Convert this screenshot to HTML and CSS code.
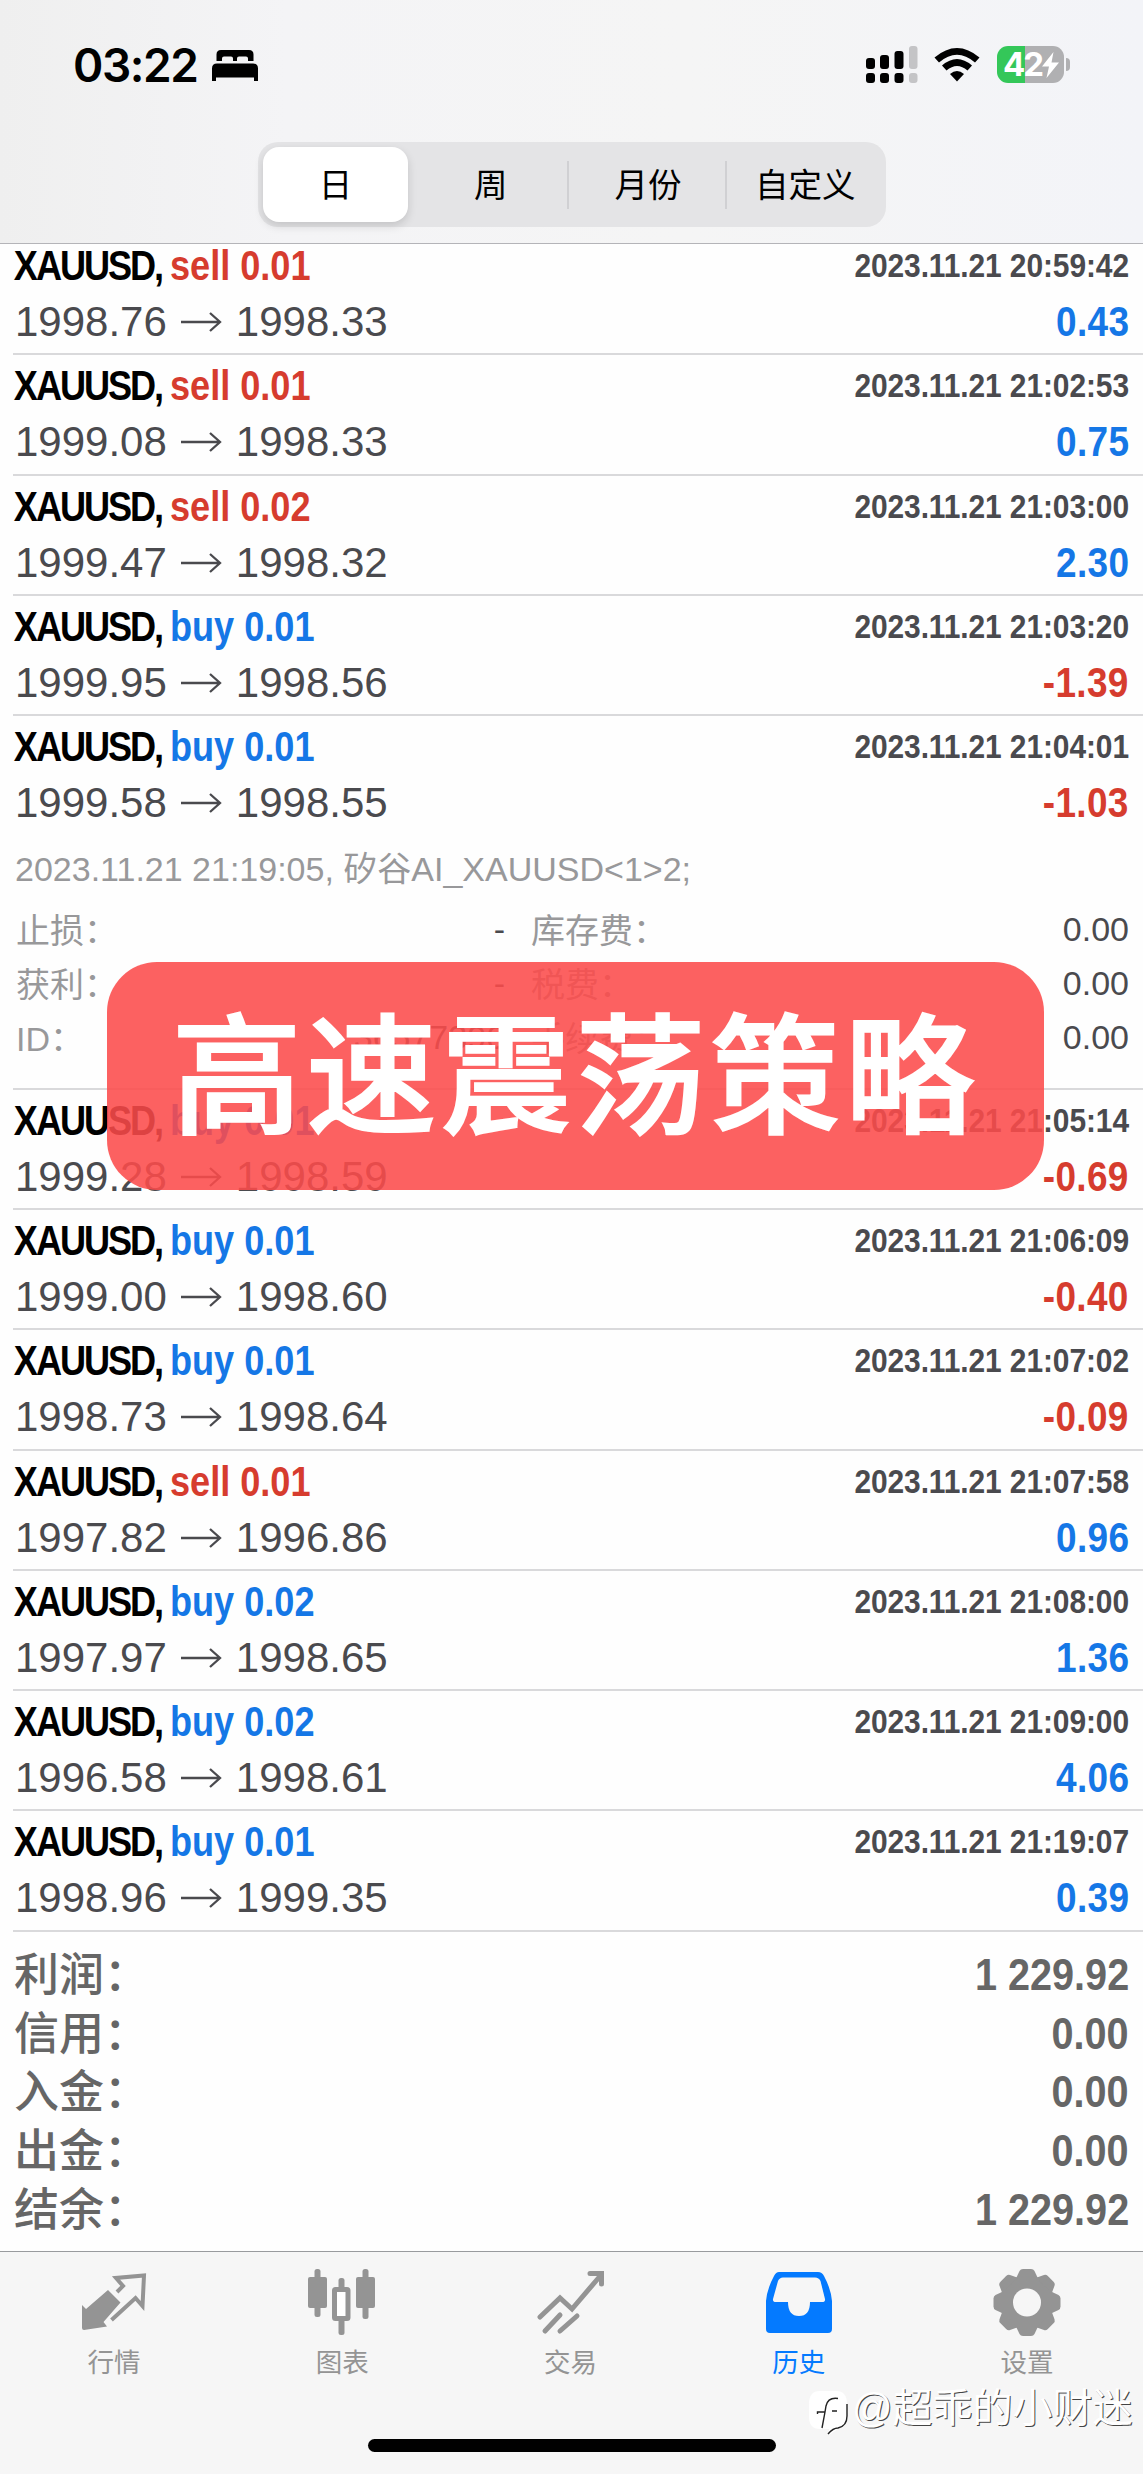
FILE: index.html
```
<!DOCTYPE html>
<html lang="zh-CN">
<head>
  <meta charset="UTF-8">
  <meta name="viewport" content="width=device-width, initial-scale=1">
  <title>历史</title>
  <link rel="stylesheet" href="styles.css">
</head>
<body>
  <div class="screen">
    <header class="header">
      <!-- Status bar -->
      <div class="status-bar">
        <div class="status-left">
          <span class="clock">03:22</span>
          <svg class="icon-bed" width="46" height="32" viewBox="0 0 46 32">
            <path d="M4.500 11V4.500Q4.500 0 9 0H37Q41.500 0 41.500 4.500V11H36V8.500Q36 6.500 34 6.500H27Q25 6.500 25 8.500V11H21V8.500Q21 6.500 19 6.500H12Q10 6.500 10 8.500V11Z"/>
            <path d="M0 31V18.500Q0 13.500 5 13.500H41Q46 13.500 46 18.500V31H42V27.500H4V31Z"/>
          </svg>
        </div>
        <div class="status-right">
          <svg width="54" height="38" viewBox="0 0 54 38">
            <rect x="0" y="12" width="9" height="11" rx="3"/>
            <rect x="14" y="9" width="9" height="14" rx="3"/>
            <rect x="28.500" y="5" width="9" height="18" rx="3"/>
            <rect x="43" y="0" width="8.500" height="23" rx="3" fill="#c4c4c6"/>
            <rect x="0" y="27" width="9" height="10" rx="3"/>
            <rect x="14" y="27" width="9" height="10" rx="3"/>
            <rect x="28.500" y="27" width="9" height="10" rx="3"/>
            <rect x="43" y="27" width="8.500" height="10" rx="3" fill="#c4c4c6"/>
          </svg>
          <svg class="icon-wifi" width="46" height="34" viewBox="0 0 46 34">
            <path d="M0.500 9.500Q23 -9.500 45.500 9.500L41 14.500Q23 -1 5 14.500Z"/>
            <path d="M8 17.500Q23 4.500 38 17.500L33.500 22.500Q23 13.500 12.500 22.500Z"/>
            <path d="M16 26Q23 20 30 26L23 33.500Z"/>
          </svg>
          <div class="battery">
            <span class="battery-level">42</span>
            <svg class="icon-bolt" width="17" height="26" viewBox="0 0 17 26">
              <path d="M11.500 0L0 14.500H7L4.500 26L17 10.500H9.500Z" fill="#fff"/>
            </svg>
          </div>
        </div>
      </div>
      <!-- Period selector -->
      <nav class="segments">
        <span class="segment selected">日</span>
        <span class="segment">周</span>
        <span class="segment divided">月份</span>
        <span class="segment divided">自定义</span>
      </nav>
    </header>

    <main class="history">
      <div id="deals"></div>
      <dl class="summary">
        <div><dt>利润：</dt><dd>1 229.92</dd></div>
        <div><dt>信用：</dt><dd>0.00</dd></div>
        <div><dt>入金：</dt><dd>0.00</dd></div>
        <div><dt>出金：</dt><dd>0.00</dd></div>
        <div><dt>结余：</dt><dd>1 229.92</dd></div>
      </dl>
    </main>

    <footer class="tab-bar">
      <a class="tab">
        <svg width="66" height="72" viewBox="0 -4 66 72">
          <path d="M27 17L39.500 29.500L22.500 49L26 53.500L3 57Q1 57 1 55V32L5 36Z" fill="currentColor"/>
          <path d="M36 19L42 13L35 5L63 2.500L61.500 33L54.500 25L30.500 47" fill="none" stroke="currentColor" stroke-width="4"/>
        </svg>
        <span>行情</span>
      </a>
      <a class="tab">
        <svg width="68" height="72" viewBox="0 0 68 72">
          <g fill="currentColor">
            <rect x="6.500" y="0" width="6" height="48" rx="2.500"/>
            <rect x="0" y="8" width="19" height="31" rx="2"/>
            <rect x="54.500" y="0" width="6" height="50" rx="2.500"/>
            <rect x="48" y="8" width="19" height="31" rx="2"/>
            <rect x="30.500" y="9" width="6" height="15" rx="2.500"/>
            <rect x="30.500" y="46" width="6" height="20" rx="2.500"/>
          </g>
          <rect x="26.500" y="20.500" width="13.500" height="29" rx="1" fill="#fff" stroke="currentColor" stroke-width="5"/>
        </svg>
        <span>图表</span>
      </a>
      <a class="tab">
        <svg width="68" height="72" viewBox="0 0 68 72">
          <g fill="none" stroke="currentColor" stroke-width="5" stroke-linecap="round">
            <path d="M3 48L23 29L35 40L64 6"/>
            <path d="M53 4.500H64.500V15"/>
            <path d="M8 62L23 46"/>
            <path d="M23 62L40 47"/>
          </g>
        </svg>
        <span>交易</span>
      </a>
      <a class="tab active">
        <svg width="68" height="72" viewBox="0 0 68 72">
          <path d="M14 3H53Q57 3 59 7Q66 20 67 32V60Q67 64 63 64H5Q1 64 1 60V32Q2 20 9 7Q11 3 14 3Z" fill="currentColor"/>
          <path d="M18 8.500H50Q54 8.500 55.500 12L60 30Q60.500 33 57 33H45Q45 47 34 47Q23 47 23 33H11Q7.500 33 8 30L13 12Q14.500 8.500 18 8.500Z" fill="#f6f6f6"/>
        </svg>
        <span>历史</span>
      </a>
      <a class="tab">
        <svg width="68" height="72" viewBox="0 0 68 72">
          <g fill="currentColor" transform="translate(34 33.500)">
            <circle r="27"/>
            <path id="tooth" d="M-11 -24L-7.500 -31.500Q-6.500 -33.500 -4 -33.500H4Q6.500 -33.500 7.500 -31.500L11 -24Z"/>
            <use href="#tooth" transform="rotate(45)"/>
            <use href="#tooth" transform="rotate(90)"/>
            <use href="#tooth" transform="rotate(135)"/>
            <use href="#tooth" transform="rotate(180)"/>
            <use href="#tooth" transform="rotate(225)"/>
            <use href="#tooth" transform="rotate(270)"/>
            <use href="#tooth" transform="rotate(315)"/>
            <circle r="14" fill="#f6f6f6"/>
          </g>
        </svg>
        <span>设置</span>
      </a>
    </footer>

    <div class="banner">高速震荡策略</div>
    <div class="home-indicator"></div>
    <div class="watermark">
      <svg width="42" height="46" viewBox="0 0 42 46">
        <path d="M12 1H28Q39 1 39 14V26Q39 36 30 39L21 45V39H12Q1 39 1 27V14Q1 1 12 1Z" fill="#fff"/>
        <path d="M30 8.500Q20 7 18 16L17 22L14 38M9.500 24V22H17M24 21H29M39 14V26Q39 36 30 38Q25 38 20 44" fill="none" stroke="#222" stroke-width="1.400"/>
      </svg>
      <span>@超乖的小财迷</span>
    </div>
  </div>

  <script>
    const deals = [
      ['sell', '0.01', '1998.76', '1998.33', '20:59:42', '0.43'],
      ['sell', '0.01', '1999.08', '1998.33', '21:02:53', '0.75'],
      ['sell', '0.02', '1999.47', '1998.32', '21:03:00', '2.30'],
      ['buy', '0.01', '1999.95', '1998.56', '21:03:20', '-1.39'],
      ['buy', '0.01', '1999.58', '1998.55', '21:04:01', '-1.03'],
      ['buy', '0.01', '1999.28', '1998.59', '21:05:14', '-0.69'],
      ['buy', '0.01', '1999.00', '1998.60', '21:06:09', '-0.40'],
      ['buy', '0.01', '1998.73', '1998.64', '21:07:02', '-0.09'],
      ['sell', '0.01', '1997.82', '1996.86', '21:07:58', '0.96'],
      ['buy', '0.02', '1997.97', '1998.65', '21:08:00', '1.36'],
      ['buy', '0.02', '1996.58', '1998.61', '21:09:00', '4.06'],
      ['buy', '0.01', '1998.96', '1999.35', '21:19:07', '0.39']
    ];

    const arrow = `<svg class="arrow" width="42" height="22" viewBox="0 0 42 22">
      <path d="M1 11H39M30 2L40 11L30 20" fill="none" stroke="currentColor" stroke-width="2.300"/></svg>`;

    // Expanded block under the opened deal
    const details = `
      <div class="details">
        <p class="comment">2023.11.21 21:19:05, 矽谷AI_XAUUSD&lt;1&gt;2;</p>
        <div class="details-grid">
          <span class="label">止损：</span><span class="value">-</span>
          <span class="label">库存费：</span><span class="value">0.00</span>
          <span class="label">获利：</span><span class="value">-</span>
          <span class="label">税费：</span><span class="value">0.00</span>
          <span class="label">ID：</span><span class="value">36577396</span>
          <span class="label">手续费：</span><span class="value">0.00</span>
        </div>
      </div>`;

    document.getElementById('deals').innerHTML = deals.map((d, i) => `
      <section class="deal${i === 4 ? ' open' : ''}">
        <div class="deal-line">
          <span class="symbol">XAUUSD, <b class="${d[0]}">${d[0]} ${d[1]}</b></span>
          <span class="time">2023.11.21 ${d[4]}</span>
        </div>
        <div class="deal-line">
          <span class="prices">${d[2]}${arrow}${d[3]}</span>
          <span class="profit ${d[5][0] === '-' ? 'loss' : 'gain'}">${d[5]}</span>
        </div>
        ${i === 4 ? details : ''}
      </section>`).join('');
  </script>
</body>
</html>
```
FILE: styles.css
```
* {
  box-sizing: border-box;
}

body {
  margin: 0;
  background: #fefefe;
  font-family: "Liberation Sans", "Noto Sans CJK SC", sans-serif;
}

.screen {
  position: relative;
  display: flex;
  flex-direction: column;
  width: 1143px;
  height: 2474px;
  overflow: hidden;
}

/* ----- HEADER ----- */
.header {
  flex: none;
  height: 244px;
  border-bottom: 1px solid #b4b4b8;
  background: linear-gradient(90deg, #efefef 0, #f4f4f6 25%, #f5f5f5 60%, #f3f4f8 100%);
  z-index: 1;
}

.status-bar {
  display: flex;
  justify-content: space-between;
  height: 142px;
  padding: 46px 79px 0 73px;
}

.status-left,
.status-right {
  display: flex;
  align-items: flex-start;
}

.clock {
  width: 139px;
  font: 600 46px/38px Inter, sans-serif;
  letter-spacing: -1.4px;
}

.icon-bed {
  margin-top: 4px;
}

.icon-wifi {
  margin: 2px 17px 0 14px;
}

.battery {
  position: relative;
  display: flex;
  align-items: center;
  width: 67px;
  height: 37px;
  padding-left: 6px;
  border-radius: 11px;
  background: linear-gradient(90deg, #34c759 28px, #b0b0b2 28px);
}

.battery::after {
  content: "";
  position: absolute;
  right: -6px;
  top: 12px;
  width: 4px;
  height: 13px;
  border-radius: 0 4px 4px 0;
  background: #b0b0b2;
}

.battery-level {
  color: #fff;
  font: 700 33px/37px Inter, sans-serif;
  letter-spacing: -2px;
}

.segments {
  display: flex;
  width: 628px;
  height: 85px;
  margin-left: 258px;
  padding: 5px;
  border-radius: 20px;
  background: #e4e4e6;
}

.segment {
  display: flex;
  flex: 1;
  align-items: center;
  justify-content: center;
  padding-bottom: 5px;
  font-size: 33.500px;
  position: relative;
}

.segment.selected {
  flex: none;
  width: 145px;
  margin-right: 7px;
  border-radius: 16px;
  background: #fff;
  box-shadow: 0 4px 10px rgba(0, 0, 0, 0.14);
}

.segment.divided {
  padding-left: 6px;
}

.segment.divided::before {
  content: "";
  position: absolute;
  left: 1px;
  top: 14px;
  width: 2px;
  height: 48px;
  background: #d0d0d3;
}

/* ----- DEALS ----- */
.history {
  flex: 1;
  margin-top: -9px;
}

.deal {
  height: 120.3px;
  margin-left: 13px;
  padding: 7px 14px 0 0;
  border-bottom: 2px solid #d9d9db;
}

.deal.open {
  height: 373.5px;
}

.deal-line {
  display: flex;
  justify-content: space-between;
  height: 56px;
  line-height: 48px;
  white-space: nowrap;
}

/* Condensed bold text */
.symbol,
.time,
.profit,
.summary dd {
  font-weight: bold;
  transform: scaleX(0.88);
  transform-origin: right;
}

.symbol {
  padding-left: 1px;
  font-size: 42px;
  letter-spacing: -2.4px;
  transform: scaleX(0.86);
  transform-origin: left;
}

.symbol b {
  letter-spacing: 0;
}

.time {
  margin-top: -1px;
  font-size: 34px;
  letter-spacing: -0.1px;
  color: #4a4a4e;
}

.prices {
  display: flex;
  align-items: center;
  height: 48px;
  padding-left: 2px;
  color: #4a4a4e;
  font-size: 42px;
}

.arrow {
  margin: 0 13.500px;
}

.profit {
  font-size: 42px;
  letter-spacing: 0.4px;
}

.buy,
.gain {
  color: #1577e6;
}

.sell,
.loss {
  color: #d63c2e;
}

.details {
  font-size: 34px;
}

.comment {
  margin: 10px 0 0 2px;
  color: #98989a;
  line-height: 48px;
}

.details-grid {
  display: grid;
  grid-template-columns: 200px 292px 250px 1fr;
  grid-auto-rows: 53.6px;
  align-items: center;
  padding-top: 9px;
}

.details-grid .label {
  padding-left: 3px;
  color: #98989a;
}

.details-grid .label:nth-child(4n + 3) {
  padding-left: 26px;
}

.details-grid .value {
  padding-top: 2px;
  color: #4a4a4e;
  text-align: right;
}

/* ----- SUMMARY ----- */
.summary {
  margin: 0;
  padding: 15px 14px 0 14px;
  color: #666;
}

.summary div {
  display: flex;
  justify-content: space-between;
  height: 58.8px;
  line-height: 58px;
}

.summary dt {
  font-size: 45px;
  font-weight: 500;
}

.summary dd {
  margin: -1px 0 0;
  font-size: 45px;
  letter-spacing: 0;
}

/* ----- TAB BAR ----- */
.tab-bar {
  display: flex;
  flex: none;
  height: 223px;
  padding-right: 2px;
  border-top: 1px solid #999b9e;
  background: #f6f6f6;
}

.tab {
  display: flex;
  flex: 1;
  flex-direction: column;
  align-items: center;
  padding-top: 17px;
  color: #949494;
  font-size: 26.5px;
}

.tab span {
  margin-top: 3px;
  line-height: 38px;
}

.tab.active {
  color: #047aff;
}

/* ----- OVERLAYS ----- */
.banner {
  position: absolute;
  left: 107px;
  top: 962px;
  width: 937px;
  height: 228px;
  border-radius: 50px;
  background: rgba(252, 75, 75, 0.88);
  color: #fff;
  font-size: 130px;
  font-weight: 500;
  -webkit-text-stroke: 2px #fff;
  letter-spacing: 4.6px;
  line-height: 232px;
  text-align: center;
  z-index: 2;
}

.home-indicator {
  position: absolute;
  left: 368px;
  top: 2439px;
  width: 408px;
  height: 13px;
  border-radius: 7px;
  background: #000;
}

.watermark {
  position: absolute;
  left: 808px;
  top: 2390px;
  display: flex;
  gap: 2px;
  color: #fff;
  font-size: 40px;
  line-height: 36px;
  white-space: nowrap;
  text-shadow: 1px 1px 0 #444;
}
```
